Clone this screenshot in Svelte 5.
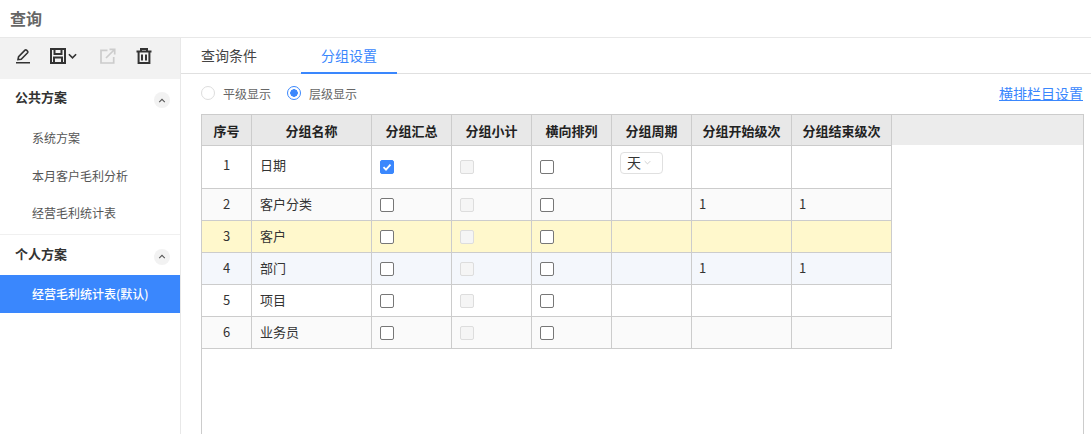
<script>
  const columns = [
    { label: "序号", width: 50 },
    { label: "分组名称", width: 120 },
    { label: "分组汇总", width: 80 },
    { label: "分组小计", width: 80 },
    { label: "横向排列", width: 80 },
    { label: "分组周期", width: 80 },
    { label: "分组开始级次", width: 100 },
    { label: "分组结束级次", width: 100 }
  ];
  const rows = [
    { no: 1, name: "日期", sum: true, period: "天", from: "", to: "", tone: "" },
    { no: 2, name: "客户分类", from: "1", to: "1", tone: "even" },
    { no: 3, name: "客户", from: "", to: "", tone: "picked" },
    { no: 4, name: "部门", from: "1", to: "1", tone: "hover" },
    { no: 5, name: "项目", from: "", to: "", tone: "" },
    { no: 6, name: "业务员", from: "", to: "", tone: "even" }
  ];
</script>

<div class="page">
  <header class="title">查询</header>
  <div class="body">
    <aside class="side">
      <div class="tools">
        <svg class="ic" viewBox="0 0 16 16"><path d="M1 14.800h14M3 11.500l.6-2.900 6.400-6.400a1.100 1.100 0 0 1 1.500 0l1.100 1.100a1.100 1.100 0 0 1 0 1.500l-6.400 6.400z" fill="none" stroke="#333" stroke-width="1.600"/></svg>
        <span class="save">
          <svg class="ic" viewBox="0 0 16 16"><path d="M1 1h14v14H1zM4.500 1v5h7V1M4 15V9.500h8V15" fill="none" stroke="#333" stroke-width="2"/></svg>
          <svg class="caret" viewBox="0 0 10 6"><path d="M1 1l4 4 4-4" fill="none" stroke="#333" stroke-width="1.800"/></svg>
        </span>
        <svg class="ic" viewBox="0 0 16 16"><path d="M7.500 2.300H1v12.700h12.700V9M6 10l8-8M9.500 1.300h5.200v5.200" fill="none" stroke="#ccc" stroke-width="1.700"/></svg>
        <svg class="ic" viewBox="0 0 16 16"><path d="M.5 3.600h15M5 3.500V1h6v2.500M2.600 4v11h10.800V4M6 6.500v6M10 6.500v6" fill="none" stroke="#333" stroke-width="2"/></svg>
      </div>
      <div class="group">
        <span>公共方案</span>
        <i class="fold"><svg viewBox="0 0 10 6"><path d="M1.500 5l3.500-3.500 3.500 3.500" fill="none" stroke="#555" stroke-width="1.300"/></svg></i>
      </div>
      <div class="plan">系统方案</div>
      <div class="plan">本月客户毛利分析</div>
      <div class="plan">经营毛利统计表</div>
      <div class="group second">
        <span>个人方案</span>
        <i class="fold"><svg viewBox="0 0 10 6"><path d="M1.500 5l3.500-3.500 3.500 3.500" fill="none" stroke="#555" stroke-width="1.300"/></svg></i>
      </div>
      <div class="plan active">经营毛利统计表(默认)</div>
    </aside>

    <main class="main">
      <nav class="tabs">
        <a class="tab">查询条件</a>
        <a class="tab on">分组设置</a>
      </nav>
      <div class="opts">
        <label class="radio"><i class="dot"></i>平级显示</label>
        <label class="radio"><i class="dot sel"></i>层级显示</label>
        <a class="link">横排栏目设置</a>
      </div>
      <div class="grid">
        <table>
          <colgroup>
            {#each columns as c}<col style="width:{c.width}px" />{/each}
          </colgroup>
          <thead>
            <tr>{#each columns as c}<th>{c.label}</th>{/each}</tr>
          </thead>
          <tbody>
            {#each rows as r}
              <tr class={r.tone} class:tall={r.no === 1}>
                <td class="mid">{r.no}</td>
                <td>{r.name}</td>
                <td class="ck"><i class="box" class:checked={r.sum}>
                  {#if r.sum}<svg viewBox="0 0 12 12"><path d="M2.500 6.200l2.500 2.500 4.500-5" fill="none" stroke="#fff" stroke-width="1.800"/></svg>{/if}
                </i></td>
                <td class="ck"><i class="box off"></i></td>
                <td class="ck"><i class="box"></i></td>
                <td class="top">
                  {#if r.period}
                    <span class="pick">{r.period}<svg viewBox="0 0 10 6"><path d="M1 1l4 4 4-4" fill="none" stroke="#bbb" stroke-width="1"/></svg></span>
                  {/if}
                </td>
                <td class="num">{r.from}</td>
                <td class="num">{r.to}</td>
              </tr>
            {/each}
          </tbody>
        </table>
      </div>
    </main>
  </div>
</div>

<style>
  :global(body) {
    margin: 0;
    background: #fff;
  }
  .page {
    width: 1091px;
    height: 434px;
    overflow: hidden;
    font-family: "Noto Sans CJK SC", "Liberation Sans", sans-serif;
    font-size: 13px;
    color: #333;
    display: flex;
    flex-direction: column;
  }
  .title {
    height: 37px;
    line-height: 36px;
    padding-left: 10px;
    font-size: 16px;
    font-weight: 700;
    color: #666;
    border-bottom: 1px solid #e8e8e8;
    flex: none;
  }
  .body {
    flex: 1;
    display: flex;
    min-height: 0;
  }
  .side {
    width: 180px;
    flex: none;
    border-right: 1px solid #e8e8e8;
  }
  .tools {
    height: 41px;
    background: #f2f2f2;
    display: flex;
    align-items: center;
    padding: 0 0 5px 15px;
    box-sizing: border-box;
  }
  .ic {
    width: 16px;
    height: 16px;
    display: block;
    flex: none;
  }
  .tools > .ic:nth-child(1) {
    margin-right: 19px;
  }
  .tools > .ic:nth-child(3) {
    margin-right: 20px;
  }
  .save {
    display: flex;
    align-items: center;
    gap: 2px;
    width: 50px;
  }
  .caret {
    width: 9px;
    height: 6px;
  }
  .group {
    display: flex;
    align-items: center;
    justify-content: space-between;
    height: 38px;
    padding: 0 10px 3px 15px;
    box-sizing: border-box;
    font-size: 13px;
    font-weight: 700;
    color: #333;
  }
  .group.second {
    height: 41.500px;
    border-top: 1px solid #f0f0f0;
    margin-top: 1px;
  }
  .fold {
    width: 16px;
    height: 16px;
    margin-top: 7px;
    border-radius: 50%;
    background: #f2f2f2;
    display: flex;
    align-items: center;
    justify-content: center;
  }
  .fold svg {
    width: 8px;
    height: 5px;
  }
  .plan {
    height: 37.500px;
    line-height: 35.500px;
    padding-left: 32px;
    font-size: 12px;
    color: #555;
  }
  .plan:nth-child(3) {
    margin-top: 3px;
  }
  .plan.active {
    height: 38px;
    line-height: 37px;
    background: #3a87fd;
    color: #fff;
    font-weight: 500;
  }
  .main {
    flex: 1;
    min-width: 0;
    display: flex;
    flex-direction: column;
  }
  .tabs {
    height: 36px;
    flex: none;
    box-sizing: border-box;
    border-bottom: 1px solid #e0e0e0;
    display: flex;
    padding-left: 20px;
  }
  .tab {
    line-height: 35px;
    font-size: 14px;
    color: #444;
    height: 36px;
    box-sizing: border-box;
  }
  .tab.on {
    width: 96px;
    text-align: center;
    margin-left: 44px;
    color: #3a87fd;
    border-bottom: 2px solid #3a87fd;
  }
  .opts {
    height: 40px;
    flex: none;
    display: flex;
    align-items: center;
    padding: 0 8px 2px 20px;
    box-sizing: border-box;
    font-size: 12px;
    color: #666;
  }
  .radio {
    display: flex;
    align-items: center;
    gap: 8px;
    margin-right: 16px;
  }
  .dot {
    width: 14px;
    height: 14px;
    box-sizing: border-box;
    border: 1px solid #ddd;
    border-radius: 50%;
    display: block;
  }
  .dot.sel {
    border-color: #3a87fd;
    background: radial-gradient(circle, #3a87fd 0 3.500px, #fff 4px);
  }
  .link {
    margin-left: auto;
    color: #3a87fd;
    font-size: 14px;
    text-decoration: underline;
  }
  .grid {
    flex: 1;
    margin: 0 7px 0 20px;
    border: 1px solid #ccc;
    border-bottom: 0;
    background: linear-gradient(#ececec 30px, #fff 30px);
  }
  table {
    border-collapse: separate;
    border-spacing: 0;
    table-layout: fixed;
    width: 690px;
  }
  th {
    height: 31px;
    box-sizing: border-box;
    padding: 0;
    font-size: 13px;
    color: #222;
    background: #e8e8e8;
    border-right: 1px solid #ccc;
    border-bottom: 1px solid #ccc;
    text-align: center;
  }
  td {
    height: 32px;
    box-sizing: border-box;
    padding: 0 8px 2px;
    font-size: 13px;
    color: #333;
    background: #fff;
    border-right: 1px solid #ccc;
    border-bottom: 1px solid #ccc;
  }
  td.mid {
    text-align: center;
    padding-left: 0;
    padding-right: 0;
  }
  td.num {
    padding-left: 7px;
  }
  tr.tall td {
    height: 43px;
    padding-bottom: 5px;
  }
  td.ck,
  tr.tall td.ck {
    padding-bottom: 0;
  }
  tr.tall td.top {
    vertical-align: top;
    padding-top: 6px;
  }
  tr.even td {
    background: #fafafa;
  }
  tr.picked td {
    background: #fff8cc;
  }
  tr.hover td {
    background: #f4f7fc;
  }
  .box {
    display: block;
    width: 14px;
    height: 14px;
    box-sizing: border-box;
    border: 1px solid #777;
    border-radius: 2px;
    background: #fff;
  }
  .box.checked {
    background: #3a87fd;
    border-color: #3a87fd;
  }
  .box.checked svg {
    display: block;
    width: 12px;
    height: 12px;
  }
  .box.off {
    border-color: #ddd;
    background: #f5f5f5;
  }
  .pick {
    display: flex;
    align-items: center;
    gap: 3px;
    height: 22px;
    width: 43px;
    box-sizing: border-box;
    padding: 0 0 2px 6px;
    border: 1px solid #e0e0e0;
    border-radius: 4px;
    background: #fff;
    color: #333;
    font-size: 14px;
  }
  .pick svg {
    width: 7px;
    height: 5px;
  }
</style>
